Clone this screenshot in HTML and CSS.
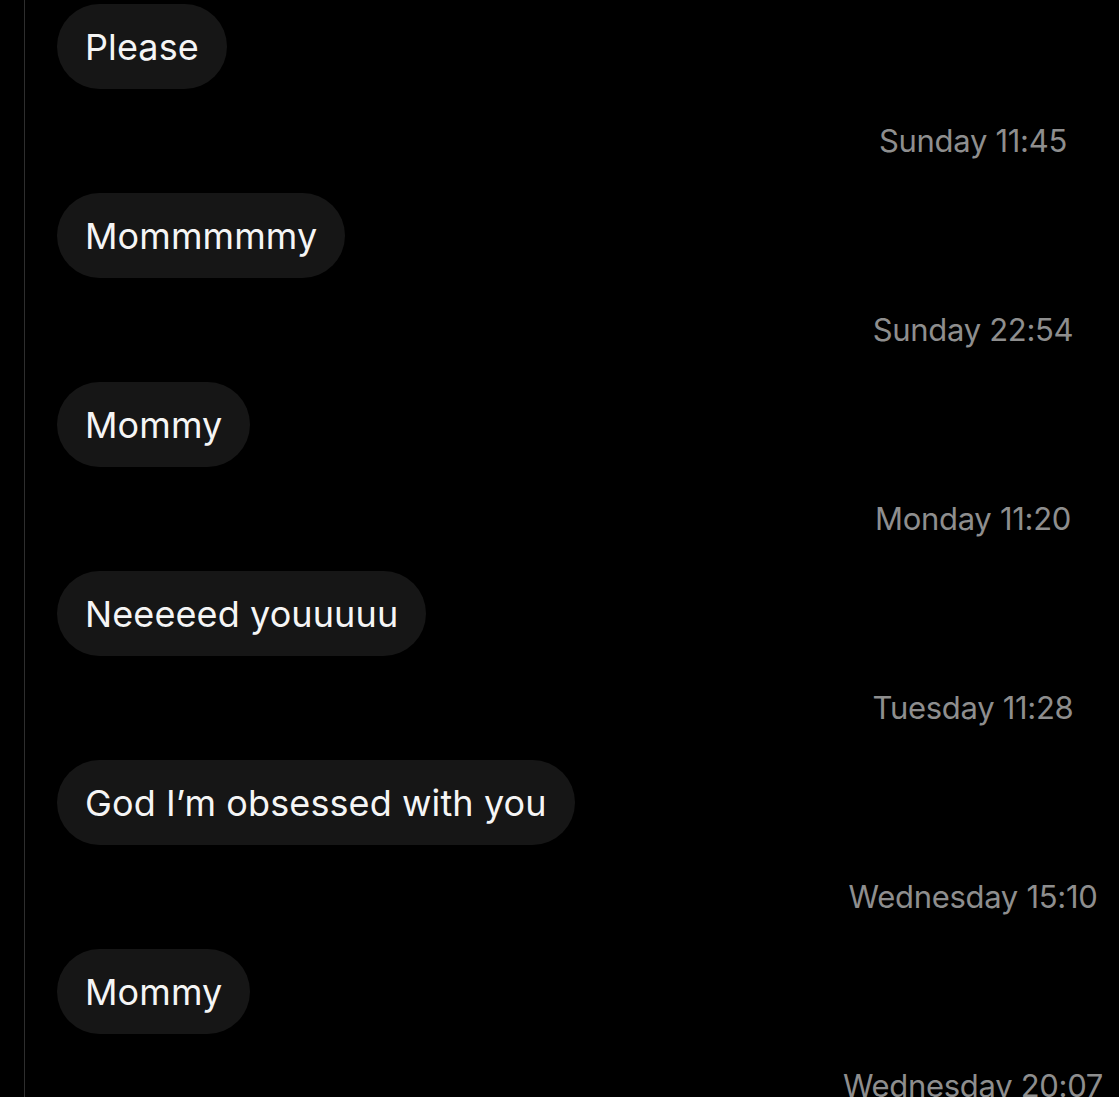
FILE: index.html
```html
<!DOCTYPE html>
<html>
<head>
<meta charset="utf-8">
<link rel="stylesheet" href="styles.css">
</head>
<body>
<div class="thread">
  <div class="msg"><div class="bubble">Please</div></div>
  <div class="time">Sunday 11:45</div>
  <div class="msg"><div class="bubble">Mommmmmy</div></div>
  <div class="time">Sunday 22:54</div>
  <div class="msg"><div class="bubble">Mommy</div></div>
  <div class="time">Monday 11:20</div>
  <div class="msg"><div class="bubble">Neeeeed youuuuu</div></div>
  <div class="time">Tuesday 11:28</div>
  <div class="msg"><div class="bubble">God I’m obsessed with you</div></div>
  <div class="time">Wednesday 15:10</div>
  <div class="msg"><div class="bubble">Mommy</div></div>
  <div class="time">Wednesday 20:07</div>
</div>
</body>
</html>
```
FILE: styles.css
```css
html, body {
  margin: 0;
  padding: 0;
  background: #000;
}
body {
  width: 1119px;
  height: 1097px;
  overflow: hidden;
  font-family: Inter, "Noto Sans", sans-serif;
}
.thread {
  margin-left: 24px;
  border-left: 1px solid #2e2e2e;
  min-height: 1097px;
  padding-top: 4px;
  display: flex;
  flex-direction: column;
}
.msg {
  display: flex;
  padding-left: 32px;
}
.bubble {
  background: #161616;
  color: #f5f5f5;
  height: 85px;
  border-radius: 43px;
  padding: 0 28px;
  display: flex;
  align-items: center;
  font-size: 36px;
  letter-spacing: 0.1px;
  white-space: nowrap;
}
.time {
  display: flex;
  justify-content: center;
  padding-left: 802px;
  height: 40px;
  line-height: 40px;
  margin: 32px 0 32px;
  color: #8e8e8e;
  font-size: 31px;
  letter-spacing: -0.3px;
  white-space: nowrap;
}
```
